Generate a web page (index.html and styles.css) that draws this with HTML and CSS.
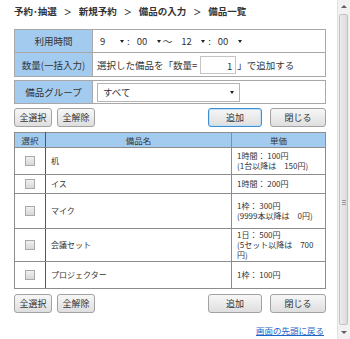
FILE: index.html
```html
<!DOCTYPE html>
<html lang="ja">
<head>
    <meta charset="UTF-8">
    <title>備品一覧</title>
    <link rel="stylesheet" href="styles.css">
</head>
<body>
    <div class="page">
        <div class="crumbs">予約･抽選<span class="sep">＞</span>新規予約<span class="sep">＞</span>備品の入力<span class="sep">＞</span>備品一覧</div>

        <table class="form">
            <tr class="time-row">
                <th>利用時間</th>
                <td>
                    <div class="time">
                        <span class="pick">9<i class="arrow"></i></span>
                        <span class="colon">:</span>
                        <span class="pick">00<i class="arrow"></i></span>
                        <span class="tilde">～</span>
                        <span class="pick">12<i class="arrow"></i></span>
                        <span class="colon">:</span>
                        <span class="pick">00<i class="arrow"></i></span>
                    </div>
                </td>
            </tr>
            <tr class="qty-row">
                <th>数量(一括入力)</th>
                <td>
                    <div class="qty">選択した備品を「数量=<span class="qty-input">1</span>」で追加する</div>
                </td>
            </tr>
        </table>

        <table class="form form-group">
            <tr class="group-row">
                <th>備品グループ</th>
                <td>
                    <div class="group-select">すべて<i class="arrow"></i></div>
                </td>
            </tr>
        </table>

        <div class="actions">
            <div class="left">
                <button class="btn">全選択</button>
                <button class="btn">全解除</button>
            </div>
            <div class="right">
                <button class="btn btn-focus">追加</button>
                <button class="btn btn-wide">閉じる</button>
            </div>
        </div>

        <table class="list">
            <tr class="head">
                <th class="col-check">選択</th>
                <th class="col-name">備品名</th>
                <th class="col-price">単価</th>
            </tr>
            <tr class="h27">
                <td class="col-check"><span class="check"></span></td>
                <td>机</td>
                <td>1時間： 100円<br>(1台以降は　150円)</td>
            </tr>
            <tr class="h19">
                <td class="col-check"><span class="check"></span></td>
                <td>イス</td>
                <td>1時間： 200円</td>
            </tr>
            <tr class="h36">
                <td class="col-check"><span class="check"></span></td>
                <td>マイク</td>
                <td>1枠： 300円<br>(9999本以降は　0円)</td>
            </tr>
            <tr class="h33">
                <td class="col-check"><span class="check"></span></td>
                <td>会議セット</td>
                <td>1日： 500円<br>(5セット以降は　700<br>円)</td>
            </tr>
            <tr class="h27">
                <td class="col-check"><span class="check"></span></td>
                <td>プロジェクター</td>
                <td>1枠： 100円</td>
            </tr>
        </table>

        <div class="actions actions-bottom">
            <div class="left">
                <button class="btn">全選択</button>
                <button class="btn">全解除</button>
            </div>
            <div class="right">
                <button class="btn">追加</button>
                <button class="btn btn-wide">閉じる</button>
            </div>
        </div>

        <div class="totop"><a href="#">画面の先頭に戻る</a></div>
    </div>

    <div class="scrollbar">
        <div class="sb-up"></div>
        <div class="sb-thumb"><span class="grip"></span></div>
        <div class="sb-down"></div>
    </div>
</body>
</html>
```

FILE: styles.css
```css
body, html {
    margin: 0;
    padding: 0;
    height: 100%;
    overflow: hidden;
    background: #fff;
    font-family: "Noto Sans CJK JP", "DejaVu Sans", sans-serif;
    color: #333;
}

.page {
    width: 312px;
    padding: 5px 0 0 14px;
}

.crumbs {
    font-size: 9.5px;
    font-weight: bold;
    line-height: 12px;
    color: #333;
    margin-bottom: 11px;
    white-space: nowrap;
}

.crumbs .sep {
    margin: 0 7px;
    font-size: 8px;
}

/* input form tables */
.form {
    width: 312px;
    border-collapse: collapse;
    font-size: 9.5px;
}

.form th,
.form td {
    border: 1px solid #a8a8a8;
    padding: 0;
}

.form th {
    width: 77px;
    background-color: #a3cbf0;
    font-weight: normal;
    text-align: center;
    color: #333;
}

.form td {
    padding-left: 4px;
}

.time-row th,
.time-row td {
    height: 22px;
}

.qty-row th,
.qty-row td {
    height: 23px;
}

.form-group {
    margin-top: 3px;
}

.group-row th,
.group-row td {
    height: 22px;
}

.time {
    display: flex;
    align-items: center;
}

.pick {
    display: flex;
    align-items: center;
    justify-content: space-between;
    width: 24px;
    padding-left: 3px;
}

.colon {
    margin: 0 4px 0 3px;
}

.tilde {
    margin: 0 6px 0 2px;
}

.arrow {
    display: inline-block;
    width: 0;
    height: 0;
    border-left: 2.5px solid transparent;
    border-right: 2.5px solid transparent;
    border-top: 3px solid #222;
}

.qty {
    display: flex;
    align-items: center;
    white-space: nowrap;
}

.qty-input {
    display: inline-block;
    width: 36px;
    height: 18px;
    line-height: 18px;
    margin: 0 1px 0 3px;
    border: 1px solid #c4c4c4;
    text-align: right;
    padding-right: 3px;
    box-sizing: border-box;
}

.group-select {
    display: flex;
    align-items: center;
    justify-content: space-between;
    width: 143px;
    height: 19px;
    box-sizing: border-box;
    border: 1px solid #b5b5b5;
    padding: 0 5px 0 5px;
}

/* buttons */
.actions {
    display: flex;
    justify-content: space-between;
    margin-top: 4px;
}

.actions-bottom {
    margin-top: 5px;
}

.actions .left,
.actions .right {
    display: flex;
    gap: 5px;
}

.actions .right {
    gap: 8px;
}

.btn {
    height: 19px;
    min-width: 38px;
    padding: 0 4px;
    border: 1px solid #a2a2a2;
    border-radius: 3px;
    background: linear-gradient(#f7f7f7, #dedede);
    font-family: inherit;
    font-size: 9px;
    color: #333;
    line-height: 17px;
    box-sizing: border-box;
}

.right .btn {
    width: 54px;
}

.right .btn-wide {
    width: 56px;
}

.btn-focus {
    border-color: #3d8ed3;
    box-shadow: inset 0 0 0 1px #bfe0f8;
}

/* item list */
.list {
    width: 312px;
    margin-top: 5px;
    border-collapse: collapse;
    font-size: 8px;
    line-height: 10px;
}

.list th,
.list td {
    border: 1px solid #8c8c8c;
    padding: 0 5px;
    text-align: left;
}

.list th {
    height: 14px;
    background-color: #a3cbf0;
    font-weight: normal;
    font-size: 8.5px;
    text-align: center;
    color: #333;
}

.list .col-check {
    width: 20px;
    text-align: center;
    border-right-color: #555;
}

.list .col-price {
    width: 83px;
}

.list .h19 td { height: 18px; }
.list .h27 td { height: 26px; }
.list .h33 td { height: 32px; }
.list .h36 td { height: 34px; }

.check {
    display: inline-block;
    width: 8px;
    height: 8px;
    border: 1px solid #a9a9a9;
    background: linear-gradient(#f0f0f0, #d8d8d8);
    vertical-align: middle;
}

.totop {
    margin-top: 12px;
    text-align: right;
    padding-right: 2px;
    font-size: 8.5px;
    line-height: 10px;
}

.totop a {
    color: #1c64c8;
    text-decoration: underline;
}

/* window scrollbar, drawn over the page edge */
.scrollbar {
    position: fixed;
    top: 0;
    right: 0;
    width: 12px;
    height: 339px;
    background-color: #f1f1f1;
    border-left: 1px solid #e2e2e2;
}

.sb-up,
.sb-down {
    position: absolute;
    left: 3px;
    width: 0;
    height: 0;
    border-left: 3px solid transparent;
    border-right: 3px solid transparent;
}

.sb-up {
    top: 5px;
    border-bottom: 3px solid #606060;
}

.sb-down {
    bottom: 5px;
    border-top: 3px solid #606060;
}

.sb-thumb {
    position: absolute;
    top: 14px;
    left: 1px;
    width: 9px;
    height: 311px;
    background: linear-gradient(90deg, #ececec, #dcdcdc);
    border: 1px solid #c3c3c3;
    border-radius: 2px;
    box-sizing: border-box;
}

.grip {
    position: absolute;
    top: 185px;
    left: 2px;
    width: 4px;
    height: 5px;
    border-top: 1px solid #999;
    border-bottom: 1px solid #999;
    box-sizing: border-box;
}

.grip::after {
    content: "";
    position: absolute;
    top: 1px;
    left: 0;
    width: 4px;
    border-top: 1px solid #999;
}
```
